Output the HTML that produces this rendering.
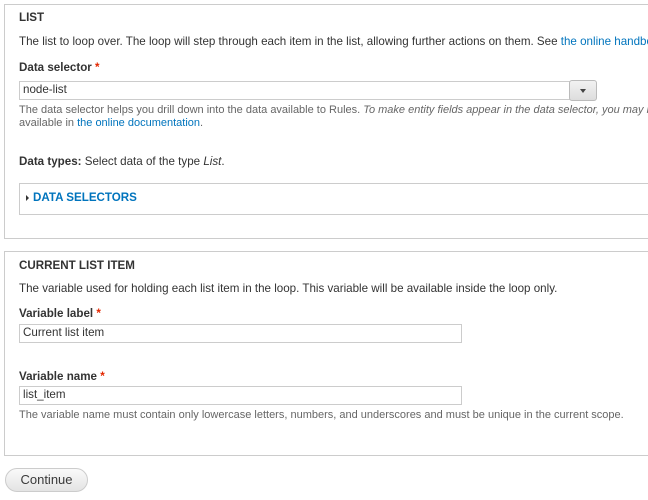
<!DOCTYPE html>
<html><head><style>
*{box-sizing:border-box;margin:0;padding:0}
html,body{width:648px;height:500px;overflow:hidden}
body{background:#fff;font-family:"Liberation Sans",sans-serif;font-size:11.6px;color:#333;position:relative}
.a{position:absolute;white-space:nowrap;line-height:14px;max-width:629px;overflow:hidden}
.fs{position:absolute;border:1px solid #ccc;border-right:none;background:#fff}
.b{font-weight:bold}
.req{color:#e32700}
.lnk{color:#0074bd}
.in{position:absolute;border:1px solid #ccc;background:#fff;padding-left:3px;line-height:16px;font-size:11.6px}
.help{color:#666;font-size:11px}
</style></head><body>
<div class="fs" style="left:4px;top:4px;width:644px;height:235px"></div>
<div class="a b" style="left:19px;top:11px">LIST</div>
<div class="a" style="left:19px;top:35px">The list to loop over. The loop will step through each item in the list, allowing further actions on them. See <span class="lnk">the online handbook</span></div>
<div class="a b" style="left:19px;top:61px">Data selector <span class="req">*</span></div>
<div class="in" style="left:19px;top:81px;width:552px;height:19px">node-list</div>
<div style="position:absolute;left:569px;top:80px;width:28px;height:21px;border:1px solid #bbb;border-radius:3px;background:linear-gradient(#f2f2f2,#ddd)"><div style="position:absolute;left:10px;top:8px;border-left:3px solid transparent;border-right:3px solid transparent;border-top:4px solid #444"></div></div>
<div class="a help" style="left:19px;top:103px">The data selector helps you drill down into the data available to Rules. <i>To make entity fields appear in the data selector, you may have to use the condition</i></div>
<div class="a help" style="left:19px;top:116px">available in <span class="lnk">the online documentation</span>.</div>
<div class="a" style="left:19px;top:155px"><b>Data types:</b> Select data of the type <i>List</i>.</div>
<div class="fs" style="left:19px;top:183px;width:629px;height:32px"></div>
<div style="position:absolute;left:26px;top:195px;border-top:3px solid transparent;border-bottom:3px solid transparent;border-left:3px solid #333"></div>
<div class="a b lnk" style="left:33px;top:191px">DATA SELECTORS</div>

<div class="fs" style="left:4px;top:251px;width:644px;height:205px"></div>
<div class="a b" style="left:19px;top:259px">CURRENT LIST ITEM</div>
<div class="a" style="left:19px;top:282px">The variable used for holding each list item in the loop. This variable will be available inside the loop only.</div>
<div class="a b" style="left:19px;top:307px">Variable label <span class="req">*</span></div>
<div class="in" style="left:19px;top:324px;width:443px;height:19px">Current list item</div>
<div class="a b" style="left:19px;top:370px">Variable name <span class="req">*</span></div>
<div class="in" style="left:19px;top:386px;width:443px;height:19px">list_item</div>
<div class="a help" style="left:19px;top:408px">The variable name must contain only lowercase letters, numbers, and underscores and must be unique in the current scope.</div>

<div style="position:absolute;left:5px;top:468px;width:83px;height:24px;border:1px solid #ccc;border-radius:12px;background:linear-gradient(#fafafa,#e4e4e4);text-align:center;line-height:22px;font-size:13px;color:#3a3a3a">Continue</div>
</body></html>
